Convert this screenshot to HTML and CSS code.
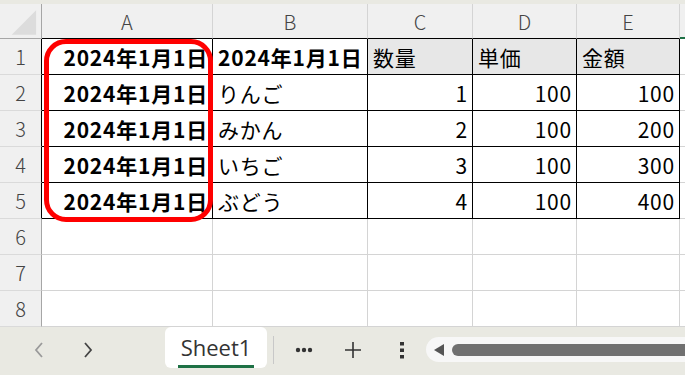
FILE: index.html
```html
<!DOCTYPE html>
<html lang="ja">
<head>
  <meta charset="UTF-8">
  <title>Sheet1</title>
  <link rel="stylesheet" href="styles.css">
</head>
<body>
  <div class="app">
    <div class="top-strip"></div>

    <div class="sheet">
      <div class="grid">
        <!-- column headers -->
        <div class="cell corner">
          <svg width="42" height="35" viewBox="0 0 42 35"><polygon points="12,31 37,6 37,31" fill="#dcdcdc"/></svg>
        </div>
        <div class="cell hdr edge">A</div>
        <div class="cell hdr edge">B</div>
        <div class="cell hdr edge">C</div>
        <div class="cell hdr edge">D</div>
        <div class="cell hdr edge">E</div>
        <div class="cell hdr active"></div>

        <!-- row 1 -->
        <div class="cell rh edge">1</div>
        <div class="cell box bold right">2024年1月1日</div>
        <div class="cell box bold">2024年1月1日</div>
        <div class="cell box fill">数量</div>
        <div class="cell box fill">単価</div>
        <div class="cell box fill">金額</div>
        <div class="cell"></div>

        <!-- row 2 -->
        <div class="cell rh edge">2</div>
        <div class="cell box bold right">2024年1月1日</div>
        <div class="cell box">りんご</div>
        <div class="cell box right">1</div>
        <div class="cell box right">100</div>
        <div class="cell box right">100</div>
        <div class="cell"></div>

        <!-- row 3 -->
        <div class="cell rh edge">3</div>
        <div class="cell box bold right">2024年1月1日</div>
        <div class="cell box">みかん</div>
        <div class="cell box right">2</div>
        <div class="cell box right">100</div>
        <div class="cell box right">200</div>
        <div class="cell"></div>

        <!-- row 4 -->
        <div class="cell rh edge">4</div>
        <div class="cell box bold right">2024年1月1日</div>
        <div class="cell box">いちご</div>
        <div class="cell box right">3</div>
        <div class="cell box right">100</div>
        <div class="cell box right">300</div>
        <div class="cell"></div>

        <!-- row 5 -->
        <div class="cell rh edge">5</div>
        <div class="cell box bold right">2024年1月1日</div>
        <div class="cell box">ぶどう</div>
        <div class="cell box right">4</div>
        <div class="cell box right">100</div>
        <div class="cell box right">400</div>
        <div class="cell"></div>

        <!-- rows 6-8 -->
        <div class="cell rh">6</div>
        <div class="cell"></div><div class="cell"></div><div class="cell"></div>
        <div class="cell"></div><div class="cell"></div><div class="cell"></div>

        <div class="cell rh">7</div>
        <div class="cell"></div><div class="cell"></div><div class="cell"></div>
        <div class="cell"></div><div class="cell"></div><div class="cell"></div>

        <div class="cell rh">8</div>
        <div class="cell"></div><div class="cell"></div><div class="cell"></div>
        <div class="cell"></div><div class="cell"></div><div class="cell"></div>
      </div>

      <!-- red highlight around column A -->
      <div class="highlight"></div>
    </div>

    <div class="bottom-bar">
      <div class="nav">
        <div class="btn">
          <svg width="12" height="16" viewBox="0 0 12 16"><polyline points="9,1 3,8 9,15" fill="none" stroke="#9a9a9a" stroke-width="1.8"/></svg>
        </div>
        <div class="btn">
          <svg width="12" height="16" viewBox="0 0 12 16"><polyline points="3,1 9,8 3,15" fill="none" stroke="#444" stroke-width="1.8"/></svg>
        </div>
      </div>

      <div class="tab"><span class="tab-label">Sheet1</span></div>
      <div class="sep"></div>

      <div class="btn">
        <svg width="18" height="6" viewBox="0 0 18 6"><circle cx="3" cy="3" r="2.2" fill="#333"/><circle cx="9" cy="3" r="2.2" fill="#333"/><circle cx="15" cy="3" r="2.2" fill="#333"/></svg>
      </div>
      <div class="btn">
        <svg width="18" height="18" viewBox="0 0 18 18"><path d="M9 1v16M1 9h16" stroke="#333" stroke-width="1.6"/></svg>
      </div>
      <div class="btn">
        <svg width="6" height="18" viewBox="0 0 6 18"><rect x="1" y="1" width="4" height="3.5" fill="#333"/><rect x="1" y="7.5" width="4" height="3.5" fill="#333"/><rect x="1" y="14" width="4" height="3.5" fill="#333"/></svg>
      </div>

      <div class="scroll-track">
        <svg class="scroll-arrow" width="10" height="12" viewBox="0 0 10 12"><polygon points="10,0 10,12 0,6" fill="#555"/></svg>
        <div class="scroll-thumb"></div>
      </div>
    </div>
  </div>
</body>
</html>
```

FILE: styles.css
```css
* {
  box-sizing: border-box;
}
body {
  margin: 0;
  background: #e9e9e2;
  font-family: 'Noto Sans CJK JP', 'Noto Sans', sans-serif;
  color: #000;
}
.app {
  width: 685px;
  height: 375px;
  overflow: hidden;
  display: flex;
  flex-direction: column;
}
.top-strip {
  height: 4px;
  background: #e9e9e2;
  flex: none;
}
.sheet {
  position: relative;
  background: #fff;
  flex: none;
}
.grid {
  display: grid;
  grid-template-columns: 42px 171px 155px 105px 104px 103px 1fr;
  grid-template-rows: 35px repeat(8, 36px);
}
.cell {
  border-right: 1px solid #d4d4d4;
  border-bottom: 1px solid #d4d4d4;
  display: flex;
  align-items: center;
  padding: 0 5px;
  font-size: 21px;
  letter-spacing: 0.8px;
  white-space: nowrap;
  overflow: hidden;
}
.corner {
  padding: 0;
  background: #f0f0f0;
  border-right-color: #a6a6a6;
  border-bottom-color: #a6a6a6;
}
.hdr {
  background: #f0f0f0;
  justify-content: center;
  color: #444;
  font-size: 20px;
  font-weight: 300;
  letter-spacing: 0;
  border-bottom-color: #a6a6a6;
}
.hdr.edge {
  border-bottom-color: #000;
}
.hdr.active {
  border-bottom: 2px solid #1e7145;
}
.rh {
  background: #f0f0f0;
  justify-content: center;
  color: #444;
  font-size: 20px;
  font-weight: 300;
  letter-spacing: 0;
  border-right-color: #a6a6a6;
  border-bottom-color: #dadada;
}
.rh.edge {
  border-right-color: #000;
}
.box {
  border-right-color: #000;
  border-bottom-color: #000;
}
.bold {
  font-weight: bold;
}
.right {
  justify-content: flex-end;
  padding-right: 4px;
}
.fill {
  background: #e7e7e7;
}
.highlight {
  position: absolute;
  left: 44px;
  top: 35px;
  width: 169px;
  height: 183px;
  border: 5px solid #ff0000;
  border-radius: 22px;
}
.bottom-bar {
  flex: 1;
  display: flex;
  align-items: flex-start;
  background: #e9e9e2;
}
.nav {
  display: flex;
  padding-left: 14px;
  width: 165px;
  flex: none;
}
.btn {
  width: 49px;
  height: 46px;
  display: flex;
  align-items: center;
  justify-content: center;
  flex: none;
}
.tab {
  width: 102px;
  height: 41px;
  background: #fff;
  border-radius: 6px;
  display: flex;
  justify-content: center;
  flex: none;
}
.tab-label {
  font-family: 'Open Sans', 'Noto Sans', sans-serif;
  font-size: 22px;
  color: #333;
  line-height: 30px;
  margin-top: 5px;
  padding: 0 3px;
  border-bottom: 3px solid #1e7145;
  height: 36px;
}
.sep {
  width: 1px;
  height: 28px;
  margin: 9px 5px 0 6px;
  background: #c8c8c8;
  flex: none;
}
.scroll-track {
  flex: none;
  width: 300px;
  height: 25px;
  margin-top: 10px;
  border-radius: 13px;
  background: #f7f7f7;
  display: flex;
  align-items: center;
  padding-left: 8px;
  gap: 8px;
}
.scroll-thumb {
  flex: 1;
  height: 12px;
  border-radius: 6px;
  background: #707070;
}
```
